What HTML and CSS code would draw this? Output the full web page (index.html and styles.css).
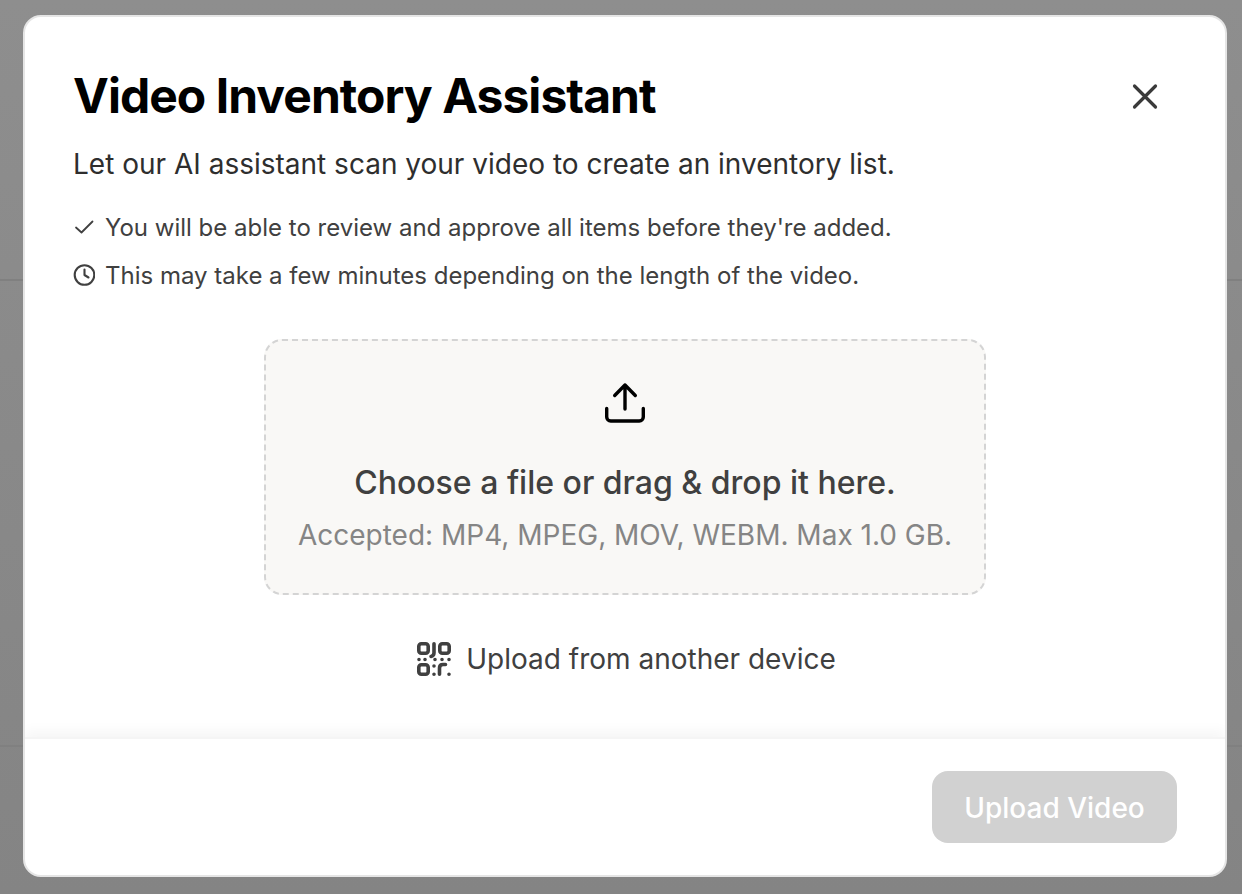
FILE: index.html
```html
<!DOCTYPE html>
<html lang="en">
<head>
    <meta charset="UTF-8">
    <title>Video Inventory Assistant</title>
    <link rel="stylesheet" href="styles.css">
</head>
<body>
    <div class="backdrop">
        <div class="line line-top"></div>
        <div class="line line-bottom"></div>
        <div class="modal">
            <div class="content">
                <div class="header">
                    <h1>Video Inventory Assistant</h1>
                    <svg class="close" width="36" height="36" viewBox="0 0 36 36" fill="none" stroke="#3a3a3a" stroke-width="3.2" stroke-linecap="round">
                        <path d="M7.5 9l21 21M28.5 9l-21 21"/>
                    </svg>
                </div>
                <p class="lead">Let our AI assistant scan your video to create an inventory list.</p>
                <div class="note">
                    <svg width="22" height="22" viewBox="0 0 22 22" fill="none" stroke="#404040" stroke-width="1.8" stroke-linecap="round" stroke-linejoin="round">
                        <path d="M3 11.5l5.5 5 11-11"/>
                    </svg>
                    <span>You will be able to review and approve all items before they're added.</span>
                </div>
                <div class="note">
                    <svg width="22" height="22" viewBox="0 0 22 22" fill="none" stroke="#404040" stroke-width="2.1" stroke-linecap="round" stroke-linejoin="round">
                        <circle cx="11.5" cy="11" r="9.8"/>
                        <path d="M11.5 5.5V11l4 2.5"/>
                    </svg>
                    <span>This may take a few minutes depending on the length of the video.</span>
                </div>
                <div class="dropzone">
                    <svg width="44" height="44" viewBox="0 0 44 44" fill="none" stroke="#000" stroke-width="3.4" stroke-linecap="round" stroke-linejoin="round">
                        <path d="M22 28V4M11.7 14.5L22 4l10.3 10.5"/>
                        <path d="M3.7 27.5V36a4 4 0 0 0 4 4h28.6a4 4 0 0 0 4-4v-8.5"/>
                    </svg>
                    <div class="drop-title">Choose a file or drag &amp; drop it here.</div>
                    <div class="drop-hint">Accepted: MP4, MPEG, MOV, WEBM. Max 1.0 GB.</div>
                </div>
                <div class="other-device">
                    <svg width="36" height="36" viewBox="0 0 36 36" fill="none" stroke="#404040" stroke-width="3.6" stroke-linecap="round" stroke-linejoin="round">
                        <rect x="2.8" y="2.8" width="9.4" height="9.4" rx="2.5"/>
                        <rect x="23.8" y="2.8" width="9.4" height="9.4" rx="2.5"/>
                        <rect x="2.8" y="23.8" width="9.4" height="9.4" rx="2.5"/>
                        <path d="M18 2.8v9q0 3-3 3.6M3 18.5h.01M9 18.5h.01M19 18.5h.01M26 18.5h.01M33 18.5h.01M18 25v.01M18 33.2v.01M23.5 33.2V27q0-3.5 3.5-3.5h2.5M33 33.2v.01"/>
                    </svg>
                    <span>Upload from another device</span>
                </div>
            </div>
            <div class="footer">
                <button class="upload" disabled>Upload Video</button>
            </div>
        </div>
    </div>
</body>
</html>
```

FILE: styles.css
```css
* {
    box-sizing: border-box;
}
html, body {
    margin: 0;
    height: 100%;
}
body {
    font-family: Inter, "Liberation Sans", sans-serif;
    overflow: hidden;
}
.backdrop {
    position: relative;
    height: 894px;
    padding: 15px 15px 17px 23px;
    background: linear-gradient(#8e8e8e, #848484);
}
.line {
    position: absolute;
    left: 0;
    right: 0;
    height: 2px;
    background: #808080;
}
.line-top {
    top: 279px;
}
.line-bottom {
    top: 745px;
}
.modal {
    position: relative;
    height: 862px;
    display: flex;
    flex-direction: column;
    overflow: hidden;
    background: #fff;
    border: 2px solid #e5e5e5;
    border-radius: 18px;
}
.content {
    flex: 1;
    padding: 46px 48px 0 48px;
}
.header {
    display: flex;
    justify-content: space-between;
    align-items: center;
    height: 64px;
}
h1 {
    margin: 0;
    font-size: 48px;
    font-weight: 700;
    letter-spacing: -0.96px;
    color: #000;
}
.close {
    margin-right: 14px;
}
.lead {
    margin: 18px 0 26px;
    font-size: 28px;
    line-height: 38px;
    color: #2e2e2e;
}
.note {
    display: flex;
    align-items: center;
    gap: 10px;
    height: 36px;
    margin-bottom: 12px;
    font-size: 24px;
    color: #404040;
}
.dropzone {
    width: 722px;
    height: 256px;
    margin: 46px auto 0;
    padding-top: 40px;
    display: flex;
    flex-direction: column;
    align-items: center;
    background: #f9f8f6;
    border: 2px dashed #d4d4d4;
    border-radius: 18px;
}
.drop-title {
    margin-top: 37px;
    font-size: 32px;
    font-weight: 500;
    line-height: 42px;
    color: #404040;
}
.drop-hint {
    margin-top: 12px;
    font-size: 28px;
    line-height: 38px;
    color: #858585;
}
.other-device {
    display: flex;
    justify-content: center;
    align-items: center;
    gap: 14px;
    margin-top: 46px;
    padding-left: 2px;
    font-size: 28px;
    color: #404040;
}
.footer {
    height: 138px;
    padding: 32px 48px 0 0;
    display: flex;
    justify-content: flex-end;
    align-items: flex-start;
    border-top: 2px solid #f5f5f5;
    box-shadow: 0 -6px 12px rgba(0, 0, 0, 0.04);
}
.upload {
    width: 245px;
    height: 72px;
    padding: 2px 0 0;
    border: none;
    border-radius: 16px;
    background: #d1d1d1;
    color: #fff;
    font-family: inherit;
    font-size: 28px;
    font-weight: 500;
}
```
